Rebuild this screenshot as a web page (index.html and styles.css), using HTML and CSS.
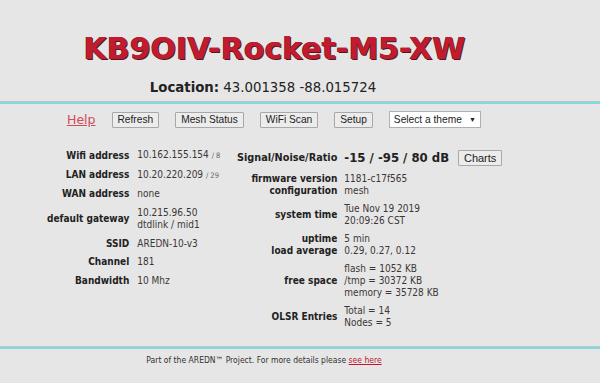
FILE: index.html
```html
<!DOCTYPE html>
<html lang="en">
<head>
    <meta charset="UTF-8">
    <meta name="viewport" content="width=device-width, initial-scale=1.0">
    <title>KB9OIV-Rocket-M5-XW status</title>
    <link rel="stylesheet" href="styles.css">
</head>
<body>
    <div class="page">
        <h1 class="node-name">KB9OIV-Rocket-M5-XW</h1>
        <div class="location"><b>Location:</b> 43.001358 -88.015724</div>
        <div class="rule"></div>

        <nav class="nav">
            <a href="#" class="help">Help</a>
            <button>Refresh</button>
            <button>Mesh Status</button>
            <button>WiFi Scan</button>
            <button>Setup</button>
            <div class="theme">Select a theme <span class="arrow">&#9660;</span></div>
        </nav>

        <div class="status">
            <table class="info left">
                <tr><th>Wifi address</th><td>10.162.155.154 <small>/ 8</small></td></tr>
                <tr><th>LAN address</th><td>10.20.220.209 <small>/ 29</small></td></tr>
                <tr><th>WAN address</th><td>none</td></tr>
                <tr><th>default gateway</th><td>10.215.96.50<br>dtdlink / mid1</td></tr>
                <tr><th>SSID</th><td>AREDN-10-v3</td></tr>
                <tr><th>Channel</th><td>181</td></tr>
                <tr><th>Bandwidth</th><td>10 Mhz</td></tr>
            </table>

            <table class="info right">
                <tr class="signal">
                    <th>Signal/Noise/Ratio</th>
                    <td><span class="snr">-15 / -95 / 80 dB</span> <button class="charts">Charts</button></td>
                </tr>
                <tr><th>firmware version<br>configuration</th><td>1181-c17f565<br>mesh</td></tr>
                <tr><th>system time</th><td>Tue Nov 19 2019<br>20:09:26 CST</td></tr>
                <tr><th>uptime<br>load average</th><td>5 min<br>0.29, 0.27, 0.12</td></tr>
                <tr><th>free space</th><td>flash = 1052 KB<br>/tmp = 30372 KB<br>memory = 35728 KB</td></tr>
                <tr><th>OLSR Entries</th><td>Total = 14<br>Nodes = 5</td></tr>
            </table>
        </div>

        <div class="rule bottom"></div>
        <div class="footer">Part of the AREDN&trade; Project. For more details please <a href="#">see here</a></div>
    </div>
</body>
</html>
```

FILE: styles.css
```css
body {
    margin: 0;
    background-color: #e6e6e6;
    font-family: "DejaVu Sans", Verdana, sans-serif;
    color: #333;
}

.page {
    width: 600px;
    height: 383px;
    overflow: hidden;
}

.node-name {
    margin: 0;
    padding: 31px 51px 0 0;
    text-align: center;
    font-size: 30px;
    font-weight: bold;
    line-height: 36px;
    color: #c21a2e;
    text-shadow: 1px 1px 0 #4b1b1b, -0.5px -0.5px 0 #6b3030;
}

.location {
    margin-top: 14px;
    padding-right: 74px;
    text-align: center;
    font-size: 13.3px;
    line-height: 14px;
    color: #222;
}

.rule {
    margin-top: 6px;
    height: 2px;
    border-top: 1px solid #c4c4c4;
    background-color: #7fdcdc;
}

.nav {
    display: flex;
    align-items: center;
    gap: 16px;
    margin-left: 67px;
    margin-top: 7px;
    height: 17px;
}

.help {
    font-size: 12.5px;
    color: #d24a5c;
}

button {
    font-family: "Liberation Sans", Arial, sans-serif;
    font-size: 10.2px;
    color: #222;
    height: 16px;
    padding: 0 5px;
    border: 1px solid #a8a8a8;
    border-radius: 1px;
    background-color: #ececec;
}

.theme {
    display: flex;
    justify-content: space-between;
    align-items: center;
    width: 82px;
    height: 15px;
    padding: 0 4px 0 4px;
    background-color: #fff;
    border: 1px solid #b0b0b0;
    font-family: "Liberation Sans", Arial, sans-serif;
    font-size: 10.2px;
    color: #222;
    white-space: nowrap;
}

.arrow {
    font-size: 7px;
}

.status {
    display: flex;
    align-items: flex-start;
    margin-top: 18px;
    height: 200px;
}

.info {
    border-collapse: collapse;
    font-family: "DejaVu Sans Condensed", "DejaVu Sans", sans-serif;
    font-size: 10px;
    line-height: 12.5px;
}

.info th {
    text-align: right;
    font-weight: bold;
    color: #222;
    padding: 3px 4px 3px 0;
    white-space: nowrap;
}

.info td {
    text-align: left;
    padding: 3px 0 3px 4px;
    color: #3c3636;
    white-space: nowrap;
}

.info small {
    font-size: 7.5px;
    color: #666;
}

.left {
    margin-left: 47px;
    width: 190px;
}

.left th {
    width: 79px;
}

.right {
    line-height: 12px;
}

.right th {
    padding-right: 3px;
}

.signal th {
    height: 18px;
    font-size: 10.8px;
}

.snr {
    font-size: 13px;
    font-weight: bold;
    color: #222;
}

.charts {
    margin-left: 6px;
    height: 16px;
    padding: 0 5px;
    font-size: 11px;
}

.rule.bottom {
    margin-top: 0;
}

.footer {
    margin-top: 6px;
    padding-right: 72px;
    text-align: center;
    font-family: "DejaVu Sans Condensed", "DejaVu Sans", sans-serif;
    font-size: 8.5px;
    color: #333;
}

.footer a {
    color: #c0192d;
}
```
